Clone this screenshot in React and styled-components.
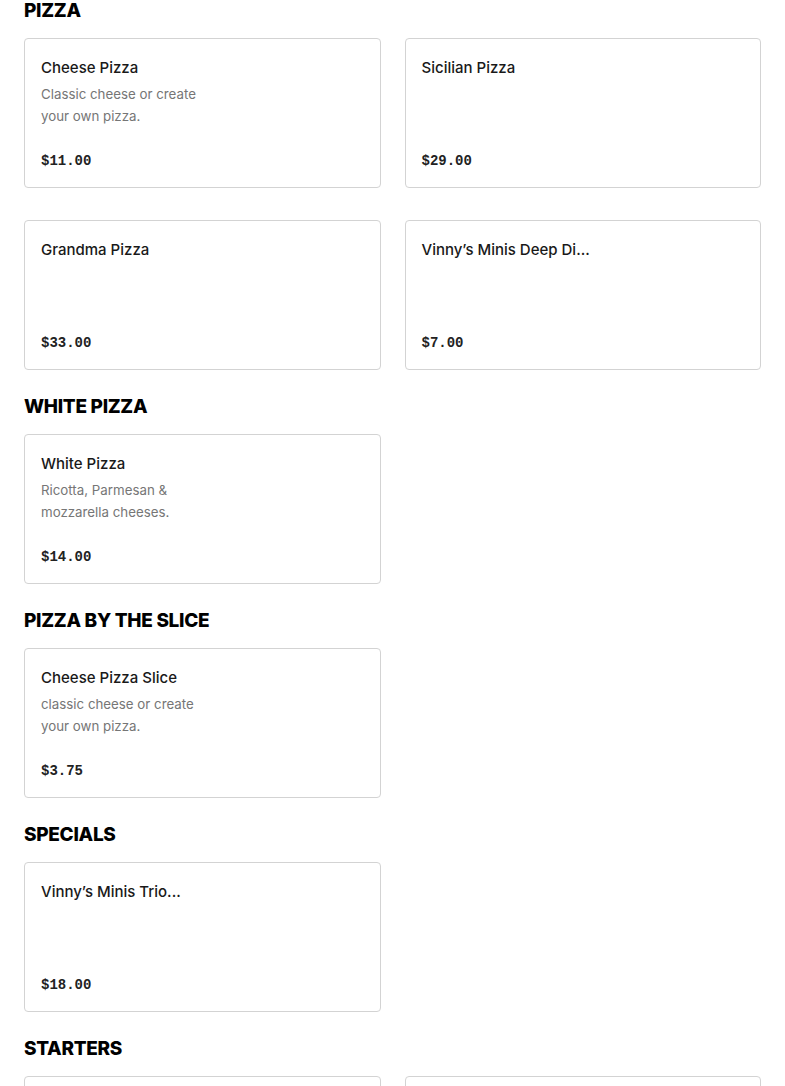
import React from "react";
import styled, { createGlobalStyle } from "styled-components";

const Global = createGlobalStyle`
  html, body { margin: 0; padding: 0; background: #ffffff; }
  body { font-family: Inter, "Noto Sans", sans-serif; color: #191919; overflow: hidden; }
`;

const Page = styled.main`
  padding: 0 24px;
  margin-top: -1px;
`;

const Section = styled.section`
  display: flex;
  flex-direction: column;
`;

const Heading = styled.h2`
  margin: ${(p) => (p.$first ? "0" : "25px")} 0 15px;
  font-family: Inter, "Noto Sans", sans-serif;
  font-size: 19px;
  line-height: 24px;
  font-weight: 800;
  text-transform: uppercase;
  letter-spacing: -0.3px;
  color: #000000;
`;

const Grid = styled.div`
  display: grid;
  grid-template-columns: 1fr 1fr;
  column-gap: 24px;
  row-gap: 32px;
`;

const Card = styled.div`
  box-sizing: border-box;
  height: 150px;
  border: 1px solid #d3d3d3;
  border-radius: 4px;
  padding: 18px 16px 16px;
  display: flex;
  flex-direction: column;
  background: #ffffff;
`;

const Title = styled.div`
  font-size: 15px;
  line-height: 22px;
  font-weight: 500;
  color: #191919;
  white-space: nowrap;
`;

const Desc = styled.div`
  margin-top: 4px;
  max-width: 165px;
  font-size: 13.3px;
  line-height: 22px;
  color: #767676;
`;

const Price = styled.div`
  margin-top: auto;
  font-family: "Liberation Mono", "DejaVu Sans Mono", monospace;
  font-size: 14px;
  line-height: 20px;
  font-weight: 700;
  color: #222222;
`;

const sections = [
  {
    name: "Pizza",
    items: [
      { title: "Cheese Pizza", desc: "Classic cheese or create your own pizza.", price: "$11.00" },
      { title: "Sicilian Pizza", price: "$29.00" },
      { title: "Grandma Pizza", price: "$33.00" },
      { title: "Vinny’s Minis Deep Di...", price: "$7.00" },
    ],
  },
  {
    name: "White Pizza",
    items: [
      { title: "White Pizza", desc: "Ricotta, Parmesan & mozzarella cheeses.", price: "$14.00" },
    ],
  },
  {
    name: "Pizza by the Slice",
    items: [
      { title: "Cheese Pizza Slice", desc: "classic cheese or create your own pizza.", price: "$3.75" },
    ],
  },
  {
    name: "Specials",
    items: [{ title: "Vinny’s Minis Trio...", price: "$18.00" }],
  },
  {
    name: "Starters",
    items: [
      { title: "", price: "" },
      { title: "", price: "" },
    ],
  },
];

export default function App() {
  return (
    <>
      <Global />
      <Page>
        {sections.map((s, i) => (
          <Section key={s.name}>
            <Heading $first={i === 0}>{s.name}</Heading>
            <Grid>
              {s.items.map((it, j) => (
                <Card key={j}>
                  <Title>{it.title}</Title>
                  {it.desc && <Desc>{it.desc}</Desc>}
                  <Price>{it.price}</Price>
                </Card>
              ))}
            </Grid>
          </Section>
        ))}
      </Page>
    </>
  );
}
